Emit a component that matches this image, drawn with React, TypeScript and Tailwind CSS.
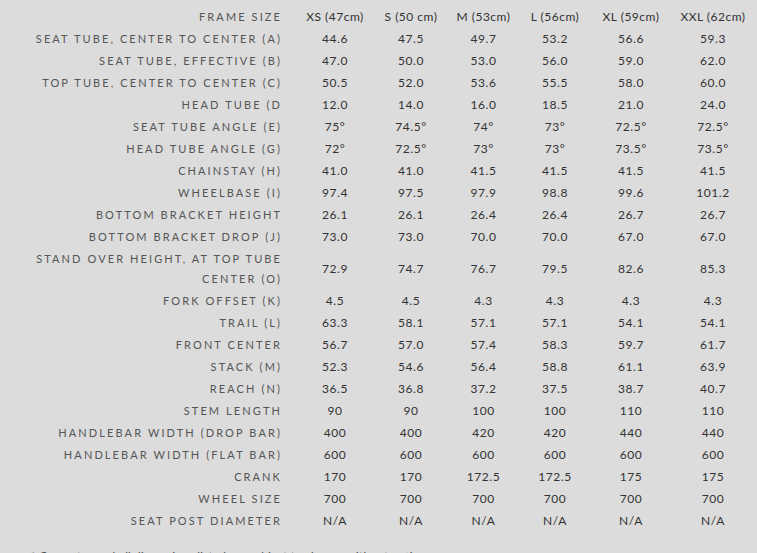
// Frame geometry table — sizes across columns, measurements down the rows.
const sizes = ['XS (47cm)', 'S (50 cm)', 'M (53cm)', 'L (56cm)', 'XL (59cm)', 'XXL (62cm)']

const rows: [string, string[]][] = [
  ['SEAT TUBE, CENTER TO CENTER (A)', ['44.6', '47.5', '49.7', '53.2', '56.6', '59.3']],
  ['SEAT TUBE, EFFECTIVE (B)', ['47.0', '50.0', '53.0', '56.0', '59.0', '62.0']],
  ['TOP TUBE, CENTER TO CENTER (C)', ['50.5', '52.0', '53.6', '55.5', '58.0', '60.0']],
  ['HEAD TUBE (D', ['12.0', '14.0', '16.0', '18.5', '21.0', '24.0']],
  ['SEAT TUBE ANGLE (E)', ['75°', '74.5°', '74°', '73°', '72.5°', '72.5°']],
  ['HEAD TUBE ANGLE (G)', ['72°', '72.5°', '73°', '73°', '73.5°', '73.5°']],
  ['CHAINSTAY (H)', ['41.0', '41.0', '41.5', '41.5', '41.5', '41.5']],
  ['WHEELBASE (I)', ['97.4', '97.5', '97.9', '98.8', '99.6', '101.2']],
  ['BOTTOM BRACKET HEIGHT', ['26.1', '26.1', '26.4', '26.4', '26.7', '26.7']],
  ['BOTTOM BRACKET DROP (J)', ['73.0', '73.0', '70.0', '70.0', '67.0', '67.0']],
  ['STAND OVER HEIGHT, AT TOP TUBE CENTER (O)', ['72.9', '74.7', '76.7', '79.5', '82.6', '85.3']],
  ['FORK OFFSET (K)', ['4.5', '4.5', '4.3', '4.3', '4.3', '4.3']],
  ['TRAIL (L)', ['63.3', '58.1', '57.1', '57.1', '54.1', '54.1']],
  ['FRONT CENTER', ['56.7', '57.0', '57.4', '58.3', '59.7', '61.7']],
  ['STACK (M)', ['52.3', '54.6', '56.4', '58.8', '61.1', '63.9']],
  ['REACH (N)', ['36.5', '36.8', '37.2', '37.5', '38.7', '40.7']],
  ['STEM LENGTH', ['90', '90', '100', '100', '110', '110']],
  ['HANDLEBAR WIDTH (DROP BAR)', ['400', '400', '420', '420', '440', '440']],
  ['HANDLEBAR WIDTH (FLAT BAR)', ['600', '600', '600', '600', '600', '600']],
  ['CRANK', ['170', '170', '172.5', '172.5', '175', '175']],
  ['WHEEL SIZE', ['700', '700', '700', '700', '700', '700']],
  ['SEAT POST DIAMETER', ['N/A', 'N/A', 'N/A', 'N/A', 'N/A', 'N/A']],
]

const grid = 'grid grid-cols-[296px_78px_74px_71px_72px_80px_84px] items-center'

function Label({ children }: { children: React.ReactNode }) {
  return (
    <div className="pr-[14px] text-right text-[11px] leading-[20px] tracking-[2.1px] text-[#555]">
      {children}
    </div>
  )
}

export default function App() {
  return (
    <div className="min-h-[553px] bg-[#dcdcdc] pt-[6px] font-['Lato','Open_Sans',sans-serif] text-[#333]">
      <div className={`${grid} py-px`}>
        <Label>FRAME SIZE</Label>
        {sizes.map((s) => (
          <div key={s} className="text-center text-[12px] leading-[20px] tracking-[0.5px]">
            {s}
          </div>
        ))}
      </div>

      {rows.map(([label, values]) => (
        <div key={label} className={`${grid} py-px`}>
          {label.startsWith('STAND OVER') ? (
            <Label>
              STAND OVER HEIGHT, AT TOP TUBE
              <br />
              CENTER (O)
            </Label>
          ) : (
            <Label>{label}</Label>
          )}
          {values.map((v, i) => (
            <div key={i} className="text-center text-[12px] leading-[20px] tracking-[0.6px]">
              {v}
            </div>
          ))}
        </div>
      ))}

      <p className="mt-[16px] pl-[30px] text-[13px] italic text-[#555]">
        * Geometry and all dimensions listed are subject to change without notice.
      </p>
    </div>
  )
}
